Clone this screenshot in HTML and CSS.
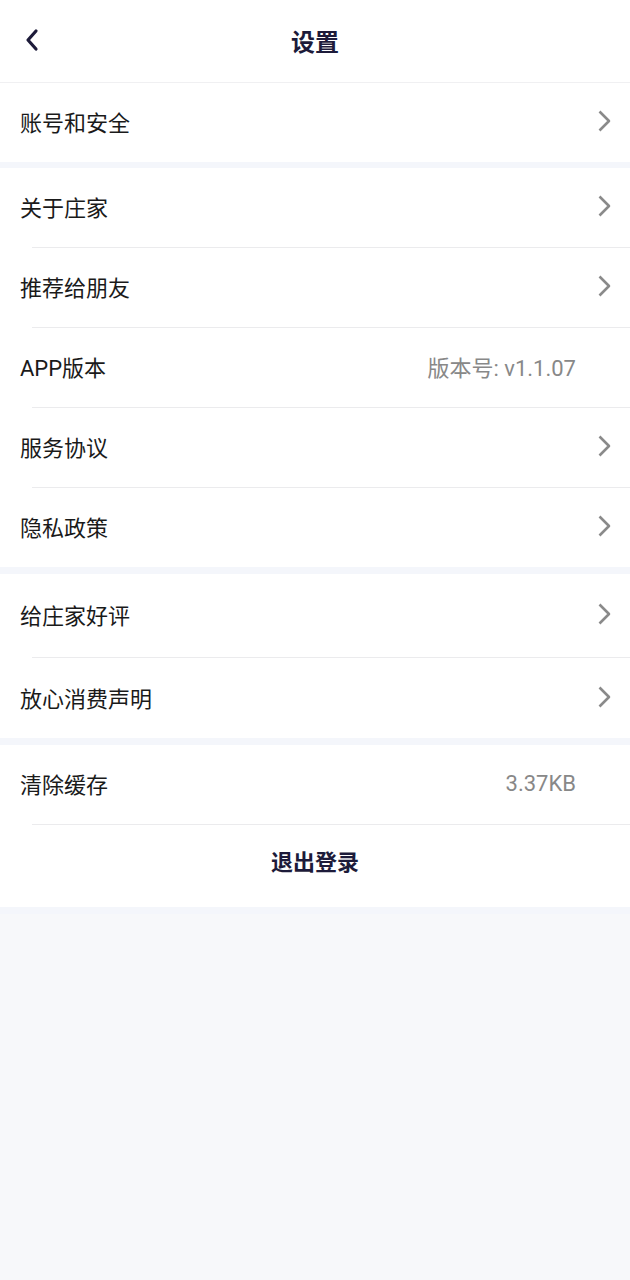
FILE: index.html
```html
<!DOCTYPE html>
<html lang="zh-CN">
<head>
    <meta charset="UTF-8">
    <meta name="viewport" content="width=device-width, initial-scale=1.0">
    <title>设置</title>
    <link rel="stylesheet" href="styles.css">
</head>
<body>

<div class="header">
    <a class="back" href="#">
        <svg width="16" height="24" viewBox="0 0 16 24"><path d="M12 3 L4 12 L12 21" fill="none" stroke="#1d1b3a" stroke-width="3.2" stroke-linecap="round" stroke-linejoin="round"/></svg>
    </a>
    <h1>设置</h1>
</div>

<div class="group">
    <div class="row">
        <span class="label">账号和安全</span>
        <svg class="arrow" viewBox="0 0 14 22"><path d="M2.5 1.5 L12 11 L2.5 20.5"/></svg>
    </div>
</div>

<div class="group">
    <div class="row">
        <span class="label">关于庄家</span>
        <svg class="arrow" viewBox="0 0 14 22"><path d="M2.5 1.5 L12 11 L2.5 20.5"/></svg>
    </div>
    <div class="row">
        <span class="label">推荐给朋友</span>
        <svg class="arrow" viewBox="0 0 14 22"><path d="M2.5 1.5 L12 11 L2.5 20.5"/></svg>
    </div>
    <div class="row value-row">
        <span class="label">APP版本</span>
        <span class="value">版本号: v1.1.07</span>
    </div>
    <div class="row">
        <span class="label">服务协议</span>
        <svg class="arrow" viewBox="0 0 14 22"><path d="M2.5 1.5 L12 11 L2.5 20.5"/></svg>
    </div>
    <div class="row">
        <span class="label">隐私政策</span>
        <svg class="arrow" viewBox="0 0 14 22"><path d="M2.5 1.5 L12 11 L2.5 20.5"/></svg>
    </div>
</div>

<div class="group tall">
    <div class="row">
        <span class="label">给庄家好评</span>
        <svg class="arrow" viewBox="0 0 14 22"><path d="M2.5 1.5 L12 11 L2.5 20.5"/></svg>
    </div>
    <div class="row">
        <span class="label">放心消费声明</span>
        <svg class="arrow" viewBox="0 0 14 22"><path d="M2.5 1.5 L12 11 L2.5 20.5"/></svg>
    </div>
</div>

<div class="group">
    <div class="row value-row">
        <span class="label">清除缓存</span>
        <span class="value">3.37KB</span>
    </div>
    <div class="row logout">退出登录</div>
</div>

</body>
</html>
```

FILE: styles.css
```css
body {
    margin: 0;
    background-color: #f7f8fa;
    font-family: Roboto, "Noto Sans CJK SC", sans-serif;
    color: #1a1a1a;
}
.header {
    height: 80px;
    padding-bottom: 2px;
    background: white;
    border-bottom: 1px solid #f0f0f2;
    display: flex;
    align-items: center;
    justify-content: center;
    position: relative;
}
.header h1 {
    margin: 0;
    font-size: 24px;
    font-weight: bold;
    color: #1d1b3a;
}
.back {
    position: absolute;
    left: 24px;
    top: 28px;
    display: flex;
}
.group {
    background: white;
    border-bottom: 6px solid #f4f6fb;
}
.group + .group {
    border-bottom-width: 7px;
}
.row {
    height: 79px;
    box-sizing: border-box;
    display: flex;
    align-items: center;
    justify-content: space-between;
    padding: 0 19px 3px 20px;
    font-size: 22px;
    position: relative;
}
/* separator line is indented, drawn over the row top */
.row + .row {
    height: 80px;
    border-top: 1px solid transparent;
}
.row + .row::before {
    content: "";
    position: absolute;
    top: -1px;
    left: 32px;
    right: 0;
    height: 1px;
    background: #ebebed;
}
.tall .row {
    height: 83px;
}
.tall .row + .row {
    height: 81px;
}
.value-row {
    padding-right: 54px;
}
.value {
    color: #888;
    font-size: 22px;
}
.arrow {
    width: 14px;
    height: 22px;
    fill: none;
    stroke: #8a8a8a;
    stroke-width: 2.6;
    stroke-linejoin: round;
}
.logout {
    justify-content: center;
    font-weight: bold;
    color: #1d1b3a;
}
.row.logout {
    height: 83px;
    padding: 0 0 12px 0;
}
```
